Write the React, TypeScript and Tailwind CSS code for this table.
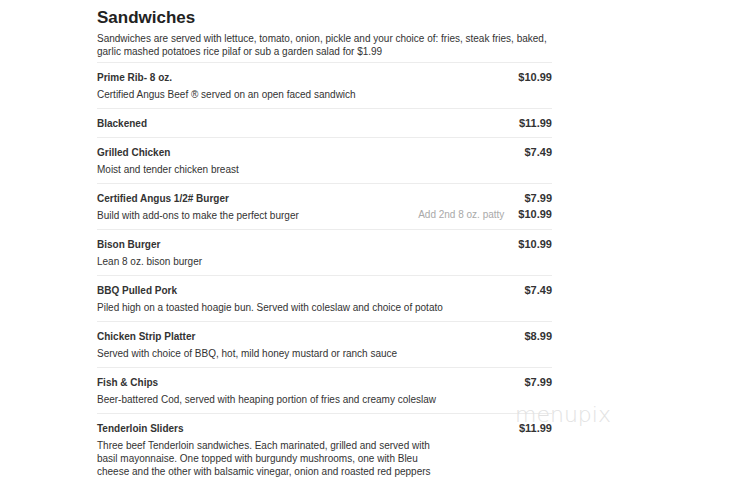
import React from "react";

type Item = {
  name: string;
  price: string;
  desc?: React.ReactNode;
  extra?: { label: string; price: string };
};

const items: Item[] = [
  { name: "Prime Rib- 8 oz.", price: "$10.99", desc: "Certified Angus Beef ® served on an open faced sandwich" },
  { name: "Blackened", price: "$11.99" },
  { name: "Grilled Chicken", price: "$7.49", desc: "Moist and tender chicken breast" },
  {
    name: "Certified Angus 1/2# Burger",
    price: "$7.99",
    desc: "Build with add-ons to make the perfect burger",
    extra: { label: "Add 2nd 8 oz. patty", price: "$10.99" },
  },
  { name: "Bison Burger", price: "$10.99", desc: "Lean 8 oz. bison burger" },
  { name: "BBQ Pulled Pork", price: "$7.49", desc: "Piled high on a toasted hoagie bun. Served with coleslaw and choice of potato" },
  { name: "Chicken Strip Platter", price: "$8.99", desc: "Served with choice of BBQ, hot, mild honey mustard or ranch sauce" },
  { name: "Fish & Chips", price: "$7.99", desc: "Beer-battered Cod, served with heaping portion of fries and creamy coleslaw" },
  {
    name: "Tenderloin Sliders",
    price: "$11.99",
    desc: (
      <>
        Three beef Tenderloin sandwiches. Each marinated, grilled and served with
        <br />
        basil mayonnaise. One topped with burgundy mushrooms, one with Bleu
        <br />
        cheese and the other with balsamic vinegar, onion and roasted red peppers
      </>
    ),
  },
];

const MenuRow = ({ item, last }: { item: Item; last: boolean }) => {
  return (
    <div className={`pt-[6px] pb-[5px] ${last ? "" : "border-b border-[#ececec]"}`}>
      <div className="flex justify-between items-center leading-[17px]">
        <span className="font-bold text-[10px]">{item.name}</span>
        <span className="font-bold text-[11px]">{item.price}</span>
      </div>
      {item.desc && (
        <div className="flex justify-between items-start">
          <p className="text-[10px] leading-[13px] pt-[2px] pb-[2px]">{item.desc}</p>
          {item.extra && (
            <div className="flex gap-[14px] items-baseline leading-[13px] pt-[1px]">
              <span className="text-[10px] text-[#a9a9a9]">{item.extra.label}</span>
              <span className="font-bold text-[11px]">{item.extra.price}</span>
            </div>
          )}
        </div>
      )}
    </div>
  );
};

const App = () => {
  return (
    <div className="relative w-[750px] h-[498px] bg-white overflow-hidden text-[#333] font-['Liberation_Sans',Arial,sans-serif]">
      <div className="ml-[97px] w-[455px] pt-[7px]">
        <h1 className="text-[17px] font-bold leading-[22px] text-[#222]">Sandwiches</h1>
        <p className="text-[10px] leading-[13px] mt-[3px] pb-[4px] border-b border-[#ececec]">
          Sandwiches are served with lettuce, tomato, onion, pickle and your choice of: fries, steak fries, baked,
          <br />
          garlic mashed potatoes rice pilaf or sub a garden salad for $1.99
        </p>
        {items.map((item, i) => (
          <MenuRow key={item.name} item={item} last={i === items.length - 1} />
        ))}
      </div>
      {/* watermark */}
      <div className="absolute left-[515px] top-[404px] text-[22px] font-extralight text-[#e2e2e2] font-['DejaVu_Sans',sans-serif] leading-none">
        menupix
      </div>
    </div>
  );
};

export default App;
